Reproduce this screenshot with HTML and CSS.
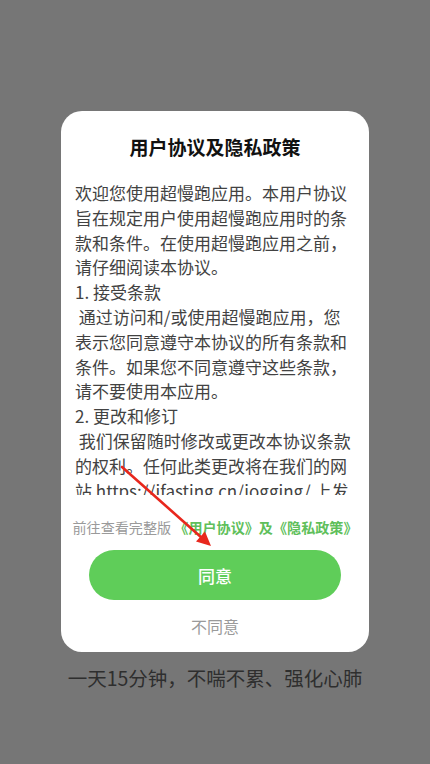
FILE: index.html
```html
<!DOCTYPE html>
<html lang="zh-CN">
<head>
<meta charset="utf-8">
<title>用户协议及隐私政策</title>
<link rel="stylesheet" href="styles.css">
</head>
<body>
<div class="screen">
  <div class="card">
    <div class="title">用户协议及隐私政策</div>
    <div class="content">
      <p class="para">欢迎您使用超慢跑应用。本用户协议旨在规定用户使用超慢跑应用时的条款和条件。在使用超慢跑应用之前，请仔细阅读本协议。</p>
      <p class="para">1. 接受条款</p>
      <p class="para"> 通过访问和/或使用超慢跑应用，您表示您同意遵守本协议的所有条款和条件。如果您不同意遵守这些条款，请不要使用本应用。</p>
      <p class="para">2. 更改和修订</p>
      <p class="para"> 我们保留随时修改或更改本协议条款的权利。任何此类更改将在我们的网站 https://ifasting.cn/jogging/ 上发布，并在发布后立即生效。</p>
    </div>
    <div class="links"><span class="muted">前往查看完整版 </span><span class="green">《用户协议》及《隐私政策》</span></div>
    <div class="agree">同意</div>
    <div class="disagree">不同意</div>
  </div>
  <div class="slogan">一天15分钟，不喘不累、强化心肺</div>
  <svg class="arrow" width="430" height="764" viewBox="0 0 430 764">
    <line x1="122" y1="467" x2="202" y2="538" stroke="#e8271d" stroke-width="2.6" stroke-linecap="round"/>
    <polygon points="211,546 196,541.5 205,531.5" fill="#e8271d"/>
  </svg>
</div>
</body>
</html>
```
FILE: styles.css
```css
html, body {
  margin: 0;
  padding: 0;
}
body {
  background: #767676;
  font-family: "Noto Sans CJK SC", "Noto Sans", sans-serif;
}
.screen {
  position: relative;
  width: 430px;
  height: 764px;
  padding-top: 111px;
  box-sizing: border-box;
  overflow: hidden;
}
.card {
  margin-left: 61px;
  width: 308px;
  height: 541px;
  background: #ffffff;
  border-radius: 21px;
  box-sizing: border-box;
  padding-top: 22px;
  display: flex;
  flex-direction: column;
  align-items: center;
}
.title {
  font-size: 19px;
  line-height: 28px;
  font-weight: 600;
  color: #111111;
}
.content {
  margin-top: 20px;
  width: 280px;
  height: 314px;
  flex-shrink: 0;
  overflow: hidden;
  color: #424242;
  font-size: 17px;
  line-height: 24.8px;
}
.para {
  margin: 0;
  white-space: pre-wrap;
}
.links {
  margin-top: 22px;
  font-size: 14.1px;
  line-height: 20px;
  white-space: pre;
}
.muted {
  color: #9a9a9a;
}
.green {
  color: #5fbf5b;
  font-weight: 600;
}
.agree {
  margin-top: 13px;
  width: 252px;
  height: 50px;
  flex-shrink: 0;
  border-radius: 25px;
  background: #5fcd59;
  color: #ffffff;
  font-size: 17px;
  font-weight: 500;
  display: flex;
  align-items: center;
  justify-content: center;
}
.disagree {
  margin-top: 14px;
  font-size: 16px;
  line-height: 24px;
  color: #9a9a9a;
}
.slogan {
  margin-top: 12px;
  text-align: center;
  font-size: 19.5px;
  line-height: 28px;
  color: #2e2e2e;
}
.arrow {
  position: absolute;
  left: 0;
  top: 0;
  pointer-events: none;
}
```
